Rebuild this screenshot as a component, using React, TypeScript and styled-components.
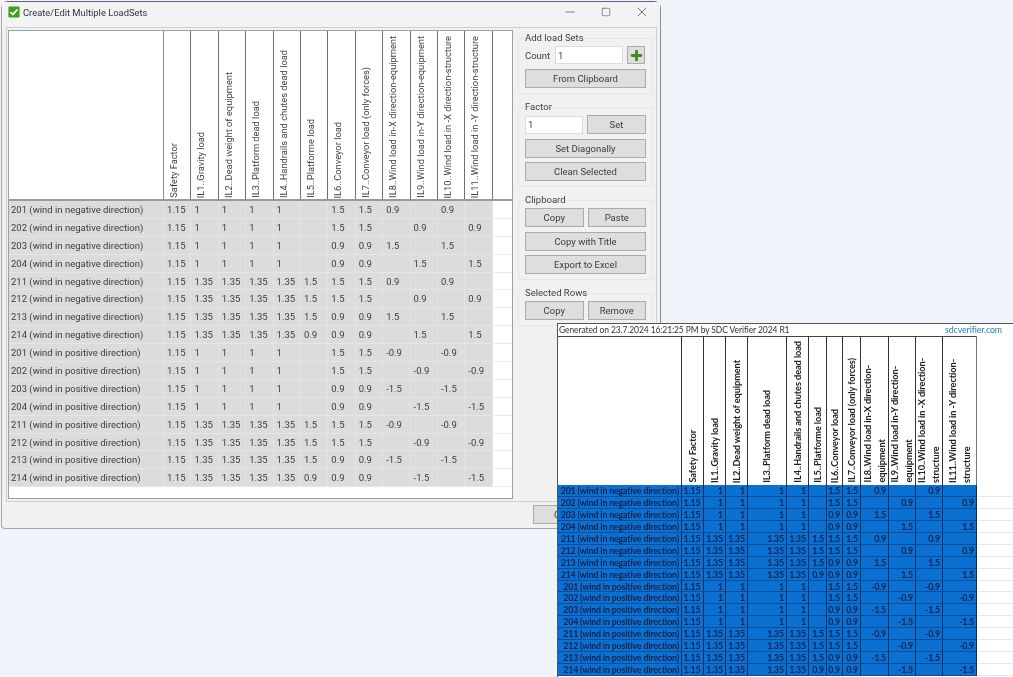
import React from "react";
import styled, { createGlobalStyle } from "styled-components";
import { Minus, Plus, Square, X } from "lucide-react";

const Global = createGlobalStyle`
  html, body { margin: 0; padding: 0; height: 677px; overflow: hidden; background: #eff3fa; }
  * { box-sizing: border-box; }
`;

const Desktop = styled.div`
  position: relative;
  width: 1013px;
  height: 677px;
  overflow: hidden;
  background: #eff3fa;
`;

const Window = styled.div`
  position: absolute;
  left: 1px;
  top: 1px;
  width: 660px;
  height: 528px;
  display: flex;
  flex-direction: column;
  background: #f1f1f1;
  border: 1px solid #a8a8ac;
  border-top-color: #6d5a86;
  border-right-color: #8d8a9a;
  border-radius: 7px 7px 0 4px;
  font-family: Roboto, "Noto Sans", sans-serif;
  color: #3c3c3c;
  font-size: 9.5px;
  filter: blur(0.35px);
`;

const TitleBar = styled.div`
  height: 24px;
  display: flex;
  align-items: center;
  padding: 0 0 4px 6px;
  background: #f3f3f3;
  flex: none;
`;

const Title = styled.span`
  margin-left: 3px;
  font-size: 9.4px;
  color: #333;
`;

const Controls = styled.div`
  margin-left: auto;
  display: flex;
  color: #333;
`;

const Control = styled.div`
  width: 36px;
  height: 20px;
  display: flex;
  align-items: center;
  justify-content: center;
`;

const Main = styled.div`
  flex: none;
  display: flex;
  gap: 5px;
  height: 475px;
  margin: 1px 3px 0 4px;
  padding: 2px 3px 0 1px;
  border: 1px solid #cfcfcf;
`;

const Grid = styled.div`
  width: 505px;
  height: 469px;
  flex: none;
  background: #fff;
  border: 1px solid #8fa3b3;
`;

const winColumns = `155px repeat(12, 27.4px) 1fr`;

const HeadRow = styled.div`
  display: grid;
  grid-template-columns: ${winColumns};
  grid-template-rows: 168px;
  height: 170px;
  border-bottom: 2px solid #9a9a9a;
`;

const HeadCell = styled.div`
  border-right: 1px solid #6f6f6f;
  display: flex;
  align-items: flex-end;
  padding: 0 0 1px 3px;
  &:first-child { border-right-color: #8c8c8c; }
  &:last-child { border-right: 0; }
`;

const VerticalLabel = styled.span`
  writing-mode: vertical-rl;
  transform: rotate(180deg);
  white-space: nowrap;
  line-height: 14px;
  font-size: 9.3px;
`;

const DataRow = styled.div`
  display: grid;
  grid-template-columns: ${winColumns};
  height: 17.9px;
`;

const DataCell = styled.div<{ $label?: boolean }>`
  background: #dcdcdc;
  border-right: 1px solid #e3e3e3;
  border-bottom: 1px solid #e6e6e6;
  display: flex;
  align-items: center;
  padding-left: ${(p) => (p.$label ? "2px" : "3px")};
  white-space: nowrap;
  overflow: hidden;
`;

const Filler = styled.div`
  background: #fff;
  border-bottom: 1px solid #ececec;
`;

const Side = styled.div`
  width: 135px;
  flex: none;
  display: flex;
  flex-direction: column;
  gap: 6px;
  margin-top: 1px;
`;

const Group = styled.fieldset`
  margin: 0;
  padding: 1px 6px 5px;
  min-width: 0;
  border: 1px solid #e6e6e6;
  display: flex;
  flex-direction: column;
  gap: 5px;
  legend { padding: 0; margin-left: 0; height: 14px; line-height: 14px; font-size: 9.5px; }
`;

const TightGroup = styled(Group)`
  gap: 4.5px;
`;

const Btn = styled.div<{ $w?: number }>`
  ${(p) => (p.$w ? `width: ${p.$w}px; flex: none;` : "")}
  height: 19px;
  background: #dedede;
  border: 1px solid #ababab;
  display: flex;
  align-items: center;
  justify-content: center;
`;

const Line = styled.div`
  display: flex;
  align-items: center;
  gap: 4px;
  ${Btn} { flex: 1 1 0; }
`;

const CountLabel = styled.span`
  width: 26px;
  flex: none;
`;

const Field = styled.div<{ $w: number }>`
  width: ${(p) => p.$w}px;
  height: 18px;
  flex: none;
  background: #fff;
  border: 1px solid #dcdcdc;
  display: flex;
  align-items: center;
  padding-left: 2px;
`;

const PlusBtn = styled.div`
  width: 18px;
  height: 18px;
  flex: none;
  background: #dedede;
  border: 1px solid #ababab;
  color: #3f8c1e;
  display: flex;
  align-items: center;
  justify-content: center;
`;

const Footer = styled.div`
  display: flex;
  justify-content: flex-end;
  padding: 3px 61px 0 0;
`;

const Sheet = styled.div`
  position: absolute;
  left: 557px;
  top: 323px;
  width: 456px;
  height: 354px;
  background: #fff;
  border-top: 1px solid #555;
  border-left: 1px solid #555;
  font-family: Lato, "Open Sans", sans-serif;
  font-weight: 700;
  font-size: 8.8px;
  letter-spacing: -0.15px;
  color: #14224a;
  filter: blur(0.35px);
`;

const SheetBanner = styled.div`
  height: 12px;
  display: flex;
  justify-content: space-between;
  align-items: center;
  font-weight: 400;
  font-size: 8.5px;
  letter-spacing: -0.1px;
  color: #333;
  padding: 0 11px 0 1px;
  line-height: 12px;
`;

const SiteLink = styled.span`
  color: #2b7cb5;
  font-size: 8.8px;
`;

const sheetColumns = `124px 22px 22px 22px 39px 22px 18px 16px 18px 28px 27px 27px 34px 1fr`;

const SheetHead = styled.div`
  display: grid;
  grid-template-columns: ${sheetColumns};
  grid-template-rows: 149px;
  height: 149px;
`;

const SheetHeadCell = styled.div`
  border-top: 1px solid #444;
  border-right: 1px solid #333;
  display: flex;
  align-items: flex-end;
  justify-content: center;
  padding-bottom: 2px;
  &:nth-child(13) { border-right-color: #777; }
`;

const SheetHeadFiller = styled.div``;

const SheetLabel = styled.span`
  writing-mode: vertical-rl;
  transform: rotate(180deg);
  white-space: pre;
  line-height: 14px;
  font-size: 9.2px;
  letter-spacing: -0.08px;
  color: #222;
`;

const SheetRow = styled.div`
  display: grid;
  grid-template-columns: ${sheetColumns};
  height: 11.95px;
`;

const SheetCell = styled.div<{ $align?: string }>`
  background: #0a70d2;
  border-right: 1px solid #0b2f60;
  border-bottom: 1px solid #0b4c96;
  line-height: 11px;
  text-align: ${(p) => p.$align || "right"};
  padding: 0 2px 0 1px;
  white-space: nowrap;
  overflow: hidden;
`;

const SheetFiller = styled.div`
  border-bottom: 1px solid #e6e6e6;
`;

const winHeads = [
  "Safety Factor",
  "IL1..Gravity load",
  "IL2..Dead weight of equipment",
  "IL3..Platform dead load",
  "IL4..Handrails and chutes dead load",
  "IL5..Platforme load",
  "IL6..Conveyor load",
  "IL7..Conveyor load (only forces)",
  "IL8..Wind load in-X direction-equipment",
  "IL9..Wind load in-Y direction-equipment",
  "IL10..Wind load in -X direction-structure",
  "IL11..Wind load in -Y direction-structure",
];

const sheetHeads = winHeads.map((h) => h.replace("direction-", "direction-\n"));

const base: [string, string[]][] = [
  ["201", ["1", "1", "1", "1", "", "1.5", "1.5", "0.9", "", "0.9", ""]],
  ["202", ["1", "1", "1", "1", "", "1.5", "1.5", "", "0.9", "", "0.9"]],
  ["203", ["1", "1", "1", "1", "", "0.9", "0.9", "1.5", "", "1.5", ""]],
  ["204", ["1", "1", "1", "1", "", "0.9", "0.9", "", "1.5", "", "1.5"]],
  ["211", ["1.35", "1.35", "1.35", "1.35", "1.5", "1.5", "1.5", "0.9", "", "0.9", ""]],
  ["212", ["1.35", "1.35", "1.35", "1.35", "1.5", "1.5", "1.5", "", "0.9", "", "0.9"]],
  ["213", ["1.35", "1.35", "1.35", "1.35", "1.5", "0.9", "0.9", "1.5", "", "1.5", ""]],
  ["214", ["1.35", "1.35", "1.35", "1.35", "0.9", "0.9", "0.9", "", "1.5", "", "1.5"]],
];

const rows = [
  ...base.map(([id, v]) => ({ label: `${id} (wind in negative direction)`, values: ["1.15", ...v] })),
  ...base.map(([id, v]) => ({
    label: `${id} (wind in positive direction)`,
    values: ["1.15", ...v.map((x, i) => (i >= 7 && x ? `-${x}` : x))],
  })),
];

const CheckIcon = () => (
  <svg width="12" height="12" viewBox="0 0 14 14">
    <rect x="0.5" y="0.5" width="13" height="13" rx="1.5" fill="#3fa01a" />
    <path d="M3 7.2 L5.8 10 L11 4" fill="none" stroke="#fff" strokeWidth="2" />
  </svg>
);

export default function App() {
  return (
    <Desktop>
      <Global />
      <Window>
        <TitleBar>
          <CheckIcon />
          <Title>Create/Edit Multiple LoadSets</Title>
          <Controls>
            <Control><Minus size={14} strokeWidth={1} /></Control>
            <Control><Square size={10} strokeWidth={1.2} /></Control>
            <Control><X size={16} strokeWidth={1} /></Control>
          </Controls>
        </TitleBar>
        <Main>
          <Grid>
            <HeadRow>
              <HeadCell />
              {winHeads.map((h) => (
                <HeadCell key={h}><VerticalLabel>{h}</VerticalLabel></HeadCell>
              ))}
              <HeadCell />
            </HeadRow>
            {rows.map((r) => (
              <DataRow key={r.label}>
                <DataCell $label>{r.label}</DataCell>
                {r.values.map((v, i) => <DataCell key={i}>{v}</DataCell>)}
                <Filler />
              </DataRow>
            ))}
          </Grid>
          <Side>
            <Group>
              <legend>Add load Sets</legend>
              <Line>
                <CountLabel>Count</CountLabel>
                <Field $w={68}>1</Field>
                <PlusBtn><Plus size={15} strokeWidth={4.5} /></PlusBtn>
              </Line>
              <Btn>From Clipboard</Btn>
            </Group>
            <TightGroup>
              <legend>Factor</legend>
              <Line>
                <Field $w={58}>1</Field>
                <Btn>Set</Btn>
              </Line>
              <Btn>Set Diagonally</Btn>
              <Btn>Clean Selected</Btn>
            </TightGroup>
            <TightGroup>
              <legend>Clipboard</legend>
              <Line>
                <Btn>Copy</Btn>
                <Btn>Paste</Btn>
              </Line>
              <Btn>Copy with Title</Btn>
              <Btn>Export to Excel</Btn>
            </TightGroup>
            <Group>
              <legend>Selected Rows</legend>
              <Line>
                <Btn>Copy</Btn>
                <Btn>Remove</Btn>
              </Line>
            </Group>
          </Side>
        </Main>
        <Footer>
          <Btn $w={66}>Close</Btn>
        </Footer>
      </Window>
      <Sheet>
        <SheetBanner>
          <span>Generated on 23.7.2024 16:21:25 PM by SDC Verifier 2024 R1</span>
          <SiteLink>sdcverifier.com</SiteLink>
        </SheetBanner>
        <SheetHead>
          <SheetHeadCell />
          {sheetHeads.map((h) => (
            <SheetHeadCell key={h}><SheetLabel>{h}</SheetLabel></SheetHeadCell>
          ))}
          <SheetHeadFiller />
        </SheetHead>
        {rows.map((r) => (
          <SheetRow key={r.label}>
            <SheetCell>{r.label}</SheetCell>
            {r.values.map((v, i) => (
              <SheetCell key={i} $align={i === 0 ? "center" : "right"}>{v}</SheetCell>
            ))}
            <SheetFiller />
          </SheetRow>
        ))}
      </Sheet>
    </Desktop>
  );
}
